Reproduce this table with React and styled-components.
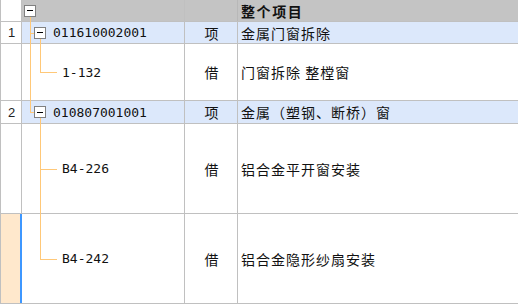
import styled, { createGlobalStyle } from "styled-components";

const GlobalStyle = createGlobalStyle`
  html, body {
    margin: 0;
    padding: 0;
    background: #ffffff;
  }
  body {
    font-family: "Noto Sans CJK SC", "Liberation Sans", sans-serif;
    color: #1c1c1c;
  }
`;

const rows = [
  { kind: "group", no: "1", code: "011610002001", type: "项", desc: "金属门窗拆除", h: 22, last: false },
  { kind: "item", code: "1-132", type: "借", desc: "门窗拆除 整樘窗", h: 57, last: true, parentLast: false },
  { kind: "group", no: "2", code: "010807001001", type: "项", desc: "金属（塑钢、断桥）窗", h: 23, last: true },
  { kind: "item", code: "B4-226", type: "借", desc: "铝合金平开窗安装", h: 90, last: false, parentLast: true },
  { kind: "item", code: "B4-242", type: "借", desc: "铝合金隐形纱扇安装", h: 90, last: true, parentLast: true, selected: true },
];

export default function App() {
  return (
    <>
      <GlobalStyle />
      <Table>
        <Row $h={22}>
          <NumCell />
          <TreeCell $bg="#c4c4c4" $pad={2}>
            <VLine $x={8} $from="50%" $to="-1px" />
            <MinusBox />
          </TreeCell>
          <TypeCell $bg="#c4c4c4" $head />
          <DescCell $bg="#c4c4c4" $head>
            整个项目
          </DescCell>
        </Row>
        {rows.map((r, i) => (
          <TreeRow key={i} row={r} />
        ))}
      </Table>
    </>
  );
}

function TreeRow({ row }) {
  const bg = row.kind === "group" ? "#dce8fb" : "#ffffff";

  if (row.kind === "group") {
    return (
      <Row $h={row.h}>
        <NumCell>{row.no}</NumCell>
        <TreeCell $bg={bg} $pad={12}>
          {row.last ? <VLine $x={8} $from="-1px" $height="50%" /> : <VLine $x={8} $from="-1px" $to="-1px" />}
          <HLine $x={8} $w={4} />
          <VLine $x={18} $from="50%" $to="-1px" />
          <MinusBox />
          <Code>{row.code}</Code>
        </TreeCell>
        <TypeCell $bg={bg}>{row.type}</TypeCell>
        <DescCell $bg={bg}>{row.desc}</DescCell>
      </Row>
    );
  }

  return (
    <Row $h={row.h}>
      <NumCell $selected={row.selected} />
      <TreeCell $bg={bg} $pad={40}>
        {!row.parentLast && <VLine $x={8} $from="-1px" $to="-1px" />}
        {row.last ? <VLine $x={18} $from="-1px" $height="50%" /> : <VLine $x={18} $from="-1px" $to="-1px" />}
        <HLine $x={18} $w={17} />
        <Code>{row.code}</Code>
      </TreeCell>
      <TypeCell $bg={bg}>{row.type}</TypeCell>
      <DescCell $bg={bg}>{row.desc}</DescCell>
    </Row>
  );
}

function MinusBox() {
  return (
    <Box>
      <span />
    </Box>
  );
}

const Table = styled.div`
  width: 518px;
  border-left: 1px solid #c0c0c0;
  box-sizing: border-box;
`;

const Row = styled.div`
  display: grid;
  grid-template-columns: 21px 163px 53px 1fr;
  height: ${(p) => p.$h}px;
  border-bottom: 1px solid #c0c0c0;
  box-sizing: border-box;
`;

const Cell = styled.div`
  display: flex;
  align-items: center;
  box-sizing: border-box;
  min-width: 0;
  background: ${(p) => p.$bg || "#ffffff"};
  border-right: 1px solid ${(p) => (p.$head ? "#b8b8b8" : "#c0c0c0")};
  white-space: nowrap;
  overflow: visible;
`;

const NumCell = styled(Cell)`
  justify-content: center;
  padding-left: 1px;
  font-family: "Liberation Sans", sans-serif;
  font-size: 13px;
  color: #222;
  background: ${(p) => (p.$selected ? "#ffe8cc" : "#ffffff")};
  border-right: ${(p) => (p.$selected ? "2px solid #3d97ff" : "1px solid #c0c0c0")};
`;

const TreeCell = styled(Cell)`
  position: relative;
  padding-left: ${(p) => p.$pad}px;
  gap: 7px;
`;

const TypeCell = styled(Cell)`
  justify-content: center;
  font-size: 14px;
  padding-left: 1px;
  color: #111;
`;

const DescCell = styled(Cell)`
  padding-left: 3px;
  font-size: 14px;
  font-weight: ${(p) => (p.$head ? 700 : 400)};
  letter-spacing: ${(p) => (p.$head ? "1.6px" : "1px")};
  color: #111;
  border-right: none;
`;

const Code = styled.span`
  font-family: "DejaVu Sans Mono", "Liberation Mono", monospace;
  font-size: 13px;
  color: #111;
`;

const Box = styled.span`
  position: relative;
  z-index: 1;
  flex: none;
  width: 12px;
  height: 12px;
  box-sizing: border-box;
  border: 1px solid #808080;
  background: #ffffff;
  display: flex;
  align-items: center;
  justify-content: center;

  span {
    width: 6px;
    height: 1px;
    background: #000;
  }
`;

const VLine = styled.span`
  position: absolute;
  left: ${(p) => p.$x}px;
  width: 1px;
  top: ${(p) => p.$from};
  ${(p) => (p.$to ? `bottom: ${p.$to};` : `height: calc(${p.$height} + 1px);`)}
  background: #ffc878;
`;

const HLine = styled.span`
  position: absolute;
  left: ${(p) => p.$x}px;
  width: ${(p) => p.$w}px;
  top: 50%;
  height: 1px;
  background: #ffc878;
`;
